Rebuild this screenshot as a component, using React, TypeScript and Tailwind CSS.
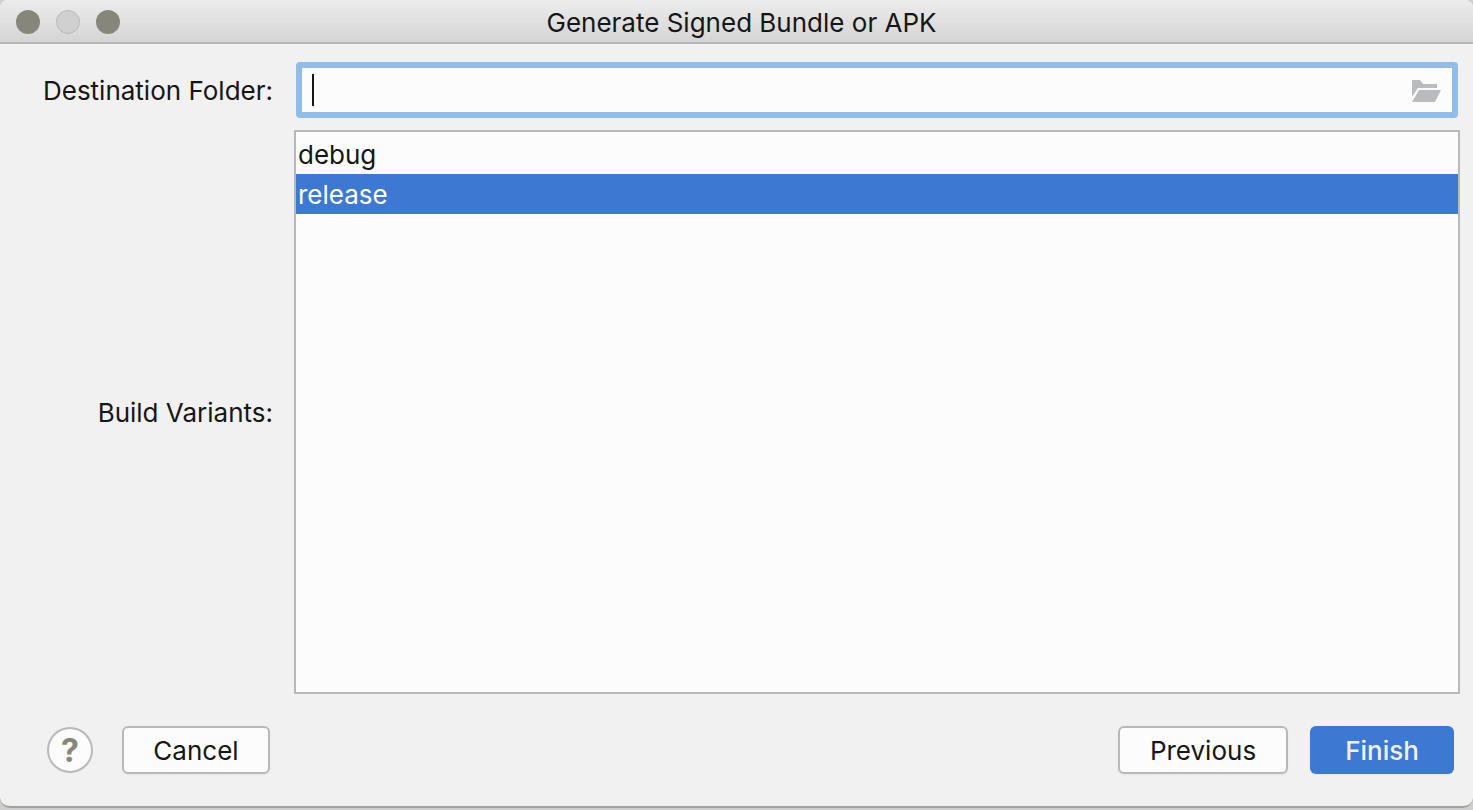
import { useState } from "react";

function TitleBar() {
  return (
    <header className="relative flex h-11 shrink-0 items-center justify-center border-b-2 border-[#b7b7b7] bg-linear-to-b from-[#ececec] to-[#d5d5d5] pt-0.5">
      <div className="absolute left-4 flex gap-4">
        <button type="button" aria-label="Close" className="size-6 rounded-full bg-[#87867a]" />
        <button type="button" aria-label="Minimize" className="size-6 rounded-full border border-[#b9b9b9] bg-[#d0d0d0]" />
        <button type="button" aria-label="Zoom" className="size-6 rounded-full bg-[#87867a]" />
      </div>
      <h1 className="pl-2.5 pt-0.5 text-[26px] leading-8">Generate Signed Bundle or APK</h1>
    </header>
  );
}

function FolderIcon() {
  return (
    <svg viewBox="0 0 30 22" className="h-[22px] w-[30px]" fill="#b9bbbd" aria-hidden="true">
      <path d="M1 0H9L12 4H26V8H7L1 17Z" />
      <path d="M8 10H30L24 22H1Z" />
    </svg>
  );
}

export default function App() {
  const [folder, setFolder] = useState("");
  const [variants, setVariants] = useState<string[]>(["release"]);

  return (
    <div className="flex min-h-screen flex-col bg-[#cfcfcf] pb-0.5 font-['Inter',sans-serif] text-[#161616]">
      <main className="flex flex-1 flex-col overflow-hidden rounded-b-[10px] rounded-t-lg border-b-2 border-[#a3a29a] bg-[#f1f1f1]">
        <TitleBar />
        <form className="flex flex-1 flex-col" onSubmit={(e) => e.preventDefault()}>
          <div className="grid flex-1 grid-cols-[273px_1fr] grid-rows-[auto_1fr] gap-x-[21px] gap-y-3 pr-[13px] pt-[18px] text-[26px] leading-8">
            <label htmlFor="folder" className="self-center pt-0.5 text-right">
              Destination Folder:
            </label>
            <div className="mx-0.5 flex h-14 items-center rounded-sm border-6 border-[#92bde8] bg-[#fcfcfc] pl-2.5 pr-[11px]">
              {folder === "" && <span className="h-8 w-0.5 bg-[#161616]" />}
              <input
                id="folder"
                type="text"
                value={folder}
                onChange={(e) => setFolder(e.target.value)}
                className="h-full min-w-0 flex-1 bg-transparent outline-none"
              />
              <button type="button" aria-label="Browse for folder" className="pt-0.5">
                <FolderIcon />
              </button>
            </div>
            <label htmlFor="variants" className="self-center pt-0.5 text-right">
              Build Variants:
            </label>
            <select
              id="variants"
              multiple
              value={variants}
              onChange={(e) => setVariants(Array.from(e.target.selectedOptions, (o) => o.value))}
              className="h-full min-h-32 w-full appearance-none border-2 border-[#b9b9b9] bg-[#fcfcfc] pt-0.5 outline-none"
            >
              {["debug", "release"].map((name) => (
                <option
                  key={name}
                  value={name}
                  className="h-10 px-0.5 pb-[3px] pt-[5px] leading-8 checked:bg-[#3d79d2] checked:bg-linear-to-r checked:from-[#3d79d2] checked:to-[#3d79d2] checked:text-white"
                >
                  {name}
                </option>
              ))}
            </select>
          </div>
          <footer className="flex items-center py-8 pl-[47px] pr-[19px] text-[26px] leading-8">
            <button
              type="button"
              aria-label="Help"
              className="size-[46px] rounded-full border-2 border-[#b9b9b9] bg-[#fcfcfc] pt-0.5 text-[32px] font-bold leading-8 text-[#87867a]"
            >
              ?
            </button>
            <button type="button" className="ml-[29px] h-12 w-[148px] rounded-md border-2 border-[#b9b9b9] bg-[#fcfcfc] pt-0.5 shadow-xs">
              Cancel
            </button>
            <button type="button" className="ml-auto h-12 w-[170px] rounded-md border-2 border-[#b9b9b9] bg-[#fcfcfc] pt-0.5 shadow-xs">
              Previous
            </button>
            <button type="submit" className="ml-[22px] h-12 w-36 rounded-md bg-[#3d79d2] pt-0.5 font-medium text-[#f1f1f1] shadow-xs">
              Finish
            </button>
          </footer>
        </form>
      </main>
    </div>
  );
}
